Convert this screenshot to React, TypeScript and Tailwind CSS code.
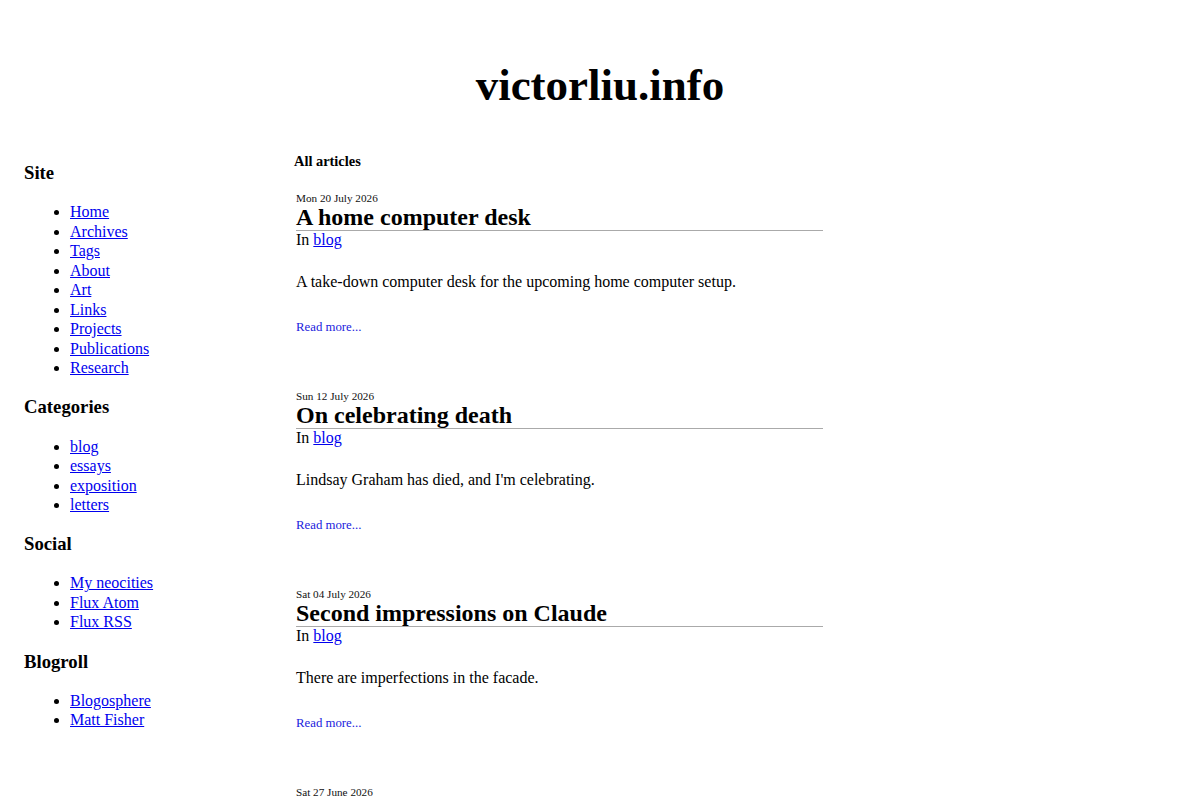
const siteLinks = ['Home', 'Archives', 'Tags', 'About', 'Art', 'Links', 'Projects', 'Publications', 'Research'];
const categories = ['blog', 'essays', 'exposition', 'letters'];
const social = ['My neocities', 'Flux Atom', 'Flux RSS'];
const blogroll = ['Blogosphere', 'Matt Fisher'];

const articles = [
  { date: 'Mon 20 July 2026', title: 'A home computer desk', summary: 'A take-down computer desk for the upcoming home computer setup.' },
  { date: 'Sun 12 July 2026', title: 'On celebrating death', summary: "Lindsay Graham has died, and I'm celebrating." },
  { date: 'Sat 04 July 2026', title: 'Second impressions on Claude', summary: 'There are imperfections in the facade.' },
  { date: 'Sat 27 June 2026', title: 'First impressions on Claude', summary: 'Trying out an assistant for a week.' },
];

const SideSection = ({ title, items, first }: { title: string; items: string[]; first?: boolean }) => (
  <div className={first ? '' : 'mt-[18.7px]'}>
    <h3 className="text-[18.72px] leading-[21.5px] font-bold">{title}</h3>
    <ul className="mt-[18.7px] list-disc pl-[46px]">
      {items.map((item) => (
        <li key={item} className="text-[16px] leading-[19.5px]">
          <a href="#" className="text-[#0000ee] underline">{item}</a>
        </li>
      ))}
    </ul>
  </div>
);

const Article = ({ date, title, summary }: { date: string; title: string; summary: string }) => (
  <article className="mb-[54px] pl-[2px]">
    <div className="text-[11.2px] leading-[14px] text-[#111]">{date}</div>
    <h2 className="w-[527px] border-b border-[#aaaaaa] text-[24px] leading-[25px] font-bold">{title}</h2>
    <div className="text-[16px] leading-[18px]">
      In <a href="#" className="text-[#0000ee] underline">blog</a>
    </div>
    <p className="mt-[24px] text-[16px] leading-[18px]">{summary}</p>
    <a href="#" className="mt-[29px] block text-[12.8px] leading-[15px] text-[#2222dd]">Read more...</a>
  </article>
);

export default function App() {
  return (
    <div className="min-h-screen bg-white font-['Liberation_Serif',serif] text-black">
      <header className="pt-[59px] text-center">
        <h1 className="text-[45px] leading-[52px] font-bold">victorliu.info</h1>
      </header>
      <div className="mt-[41.5px] flex">
        <aside className="w-[294px] shrink-0 pl-[24px] pt-[9.5px]">
          <SideSection title="Site" items={siteLinks} first />
          <SideSection title="Categories" items={categories} />
          <SideSection title="Social" items={social} />
          <SideSection title="Blogroll" items={blogroll} />
        </aside>
        <main className="flex-1">
          <h4 className="text-[14.4px] leading-[17px] font-bold">All articles</h4>
          <div className="mt-[21.5px]">
            {articles.map((a) => (
              <Article key={a.date} {...a} />
            ))}
          </div>
        </main>
      </div>
    </div>
  );
}
